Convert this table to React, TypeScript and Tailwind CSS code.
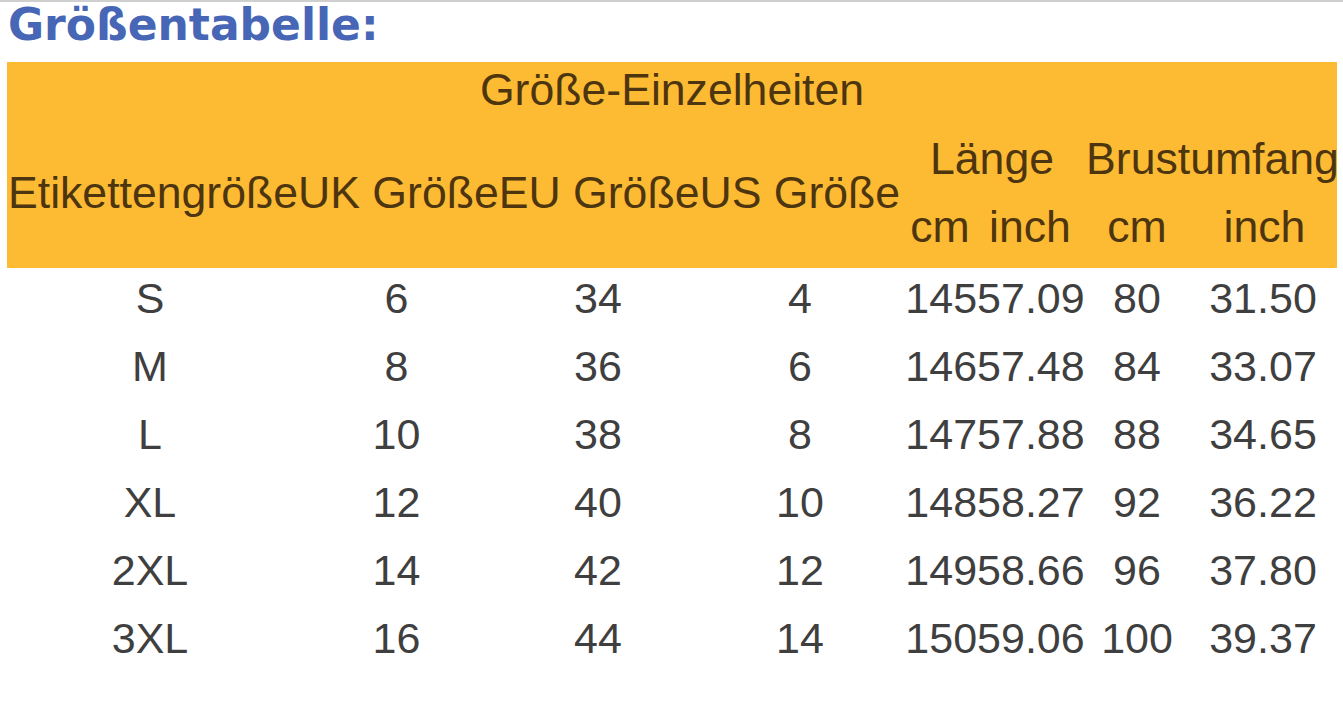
const rows = [
  ['S', '6', '34', '4', '14557.09', '80', '31.50'],
  ['M', '8', '36', '6', '14657.48', '84', '33.07'],
  ['L', '10', '38', '8', '14757.88', '88', '34.65'],
  ['XL', '12', '40', '10', '14858.27', '92', '36.22'],
  ['2XL', '14', '42', '12', '14958.66', '96', '37.80'],
  ['3XL', '16', '44', '14', '15059.06', '100', '39.37'],
];

export default function App() {
  return (
    <div className="w-[1343px] h-[707px] overflow-hidden bg-white">
      <div className="h-[2px] bg-[#cfcfcf]" />
      <h1 className="ml-[8px] mt-[1px] h-[59px] text-[44px] leading-[44px] font-bold text-[#4766b6] font-['DejaVu_Sans',sans-serif]">
        Größentabelle:
      </h1>

      <div className="ml-[7px] w-[1330px] bg-[#fdbb33] text-[#4d3510] text-[44.6px] leading-none font-['Liberation_Sans',Arial,sans-serif] grid grid-cols-[895px_76px_104px_110px_145px] grid-rows-[56px_82px_68px]">
        <div className="col-span-5 flex items-center justify-center">Größe-Einzelheiten</div>
        <div className="row-span-2 flex items-center pl-[1px] whitespace-nowrap">
          EtikettengrößeUK GrößeEU GrößeUS Größe
        </div>
        <div className="col-span-2 flex items-center justify-center">Länge</div>
        <div className="col-span-2 flex items-center justify-center whitespace-nowrap pl-[6px]">Brustumfang</div>
        <div className="flex items-center justify-center pb-[14px]">cm</div>
        <div className="flex items-center justify-center pb-[14px]">inch</div>
        <div className="flex items-center justify-center pb-[14px]">cm</div>
        <div className="flex items-center justify-center pb-[14px]">inch</div>
      </div>

      <div className="ml-[7px] w-[1330px] text-[43px] leading-none text-[#3f3f3f] font-['Liberation_Sans',Arial,sans-serif]">
        {rows.map((r) => (
          <div key={r[0]} className="grid grid-cols-[286px_207px_196px_208px_182px_102px_150px] h-[68px] pb-[8px]">
            {r.map((v, i) => (
              <div key={i} className="flex items-center justify-center whitespace-nowrap">
                {v}
              </div>
            ))}
          </div>
        ))}
      </div>
    </div>
  );
}
